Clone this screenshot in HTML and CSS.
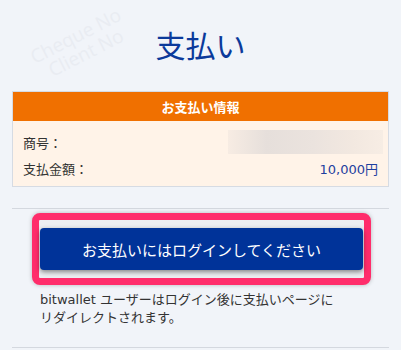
FILE: index.html
```html
<!DOCTYPE html>
<html lang="ja">
<head>
<meta charset="utf-8">
<link rel="stylesheet" href="styles.css">
</head>
<body>
<div class="watermark">
  <span class="wm wm1">Cheque No</span>
  <span class="wm wm2">Client No</span>
</div>
<div class="page">
  <h1 class="title">支払い</h1>
  <div class="card">
    <div class="card-head">お支払い情報</div>
    <div class="card-body">
      <div class="row">
        <span class="label">商号：</span>
        <span class="blur"></span>
      </div>
      <div class="row">
        <span class="label">支払金額：</span>
        <span class="value">10,000円</span>
      </div>
    </div>
  </div>
  <hr class="divider">
  <div class="highlight">
    <button class="login-btn">お支払いにはログインしてください</button>
  </div>
  <p class="note">bitwallet ユーザーはログイン後に支払いページに<br>リダイレクトされます。</p>
  <hr class="divider bottom">
</div>
</body>
</html>
```

FILE: styles.css
```css
html, body {
  margin: 0;
  padding: 0;
}
body {
  background: #f1f4f9;
  font-family: "DejaVu Sans", "Noto Sans CJK JP", sans-serif;
  color: #333;
  overflow: hidden;
  position: relative;
  height: 350px;
}
.watermark {
  position: absolute;
  inset: 0;
  pointer-events: none;
}
.wm {
  position: absolute;
  color: #e9ecf2;
  font-family: "Open Sans", sans-serif;
  font-size: 19px;
  line-height: 20px;
  white-space: nowrap;
  transform: rotate(-27deg);
  transform-origin: left bottom;
}
.wm1 { left: 36px; top: 47px; }
.wm2 { left: 54px; top: 60px; }
.page {
  position: relative;
  padding: 0 12px;
}
.title {
  margin: 0 0 29px;
  padding-top: 26px;
  font-family: "Noto Sans CJK JP", sans-serif;
  font-size: 30px;
  line-height: 36px;
  font-weight: 400;
  text-align: center;
  color: #0b3a9b;
}
.card {
  border: 1px solid #d6dbe3;
  background: #fff3e8;
}
.card-head {
  background: #f07000;
  color: #fff;
  text-align: center;
  font-family: "Noto Sans CJK JP", sans-serif;
  font-size: 13px;
  font-weight: 700;
  line-height: 29px;
  height: 29px;
}
.card-body {
  padding: 9px 10px 6px;
  display: flex;
  flex-direction: column;
  gap: 2px;
}
.row {
  display: flex;
  justify-content: space-between;
  align-items: center;
  height: 24px;
  font-size: 13px;
}
.label {
  color: #333;
}
.blur {
  width: 155px;
  height: 24px;
  margin-right: -5px;
  background: linear-gradient(90deg, #f7ece3 0%, #e6dfdb 25%, #ebe3de 55%, #f2e8e0 80%, #f7ede4 100%);
}
.value {
  color: #1e409f;
  font-size: 13px;
}
.divider {
  border: 0;
  border-top: 1px solid #d4d8df;
  margin: 21px 0 0;
}
.highlight {
  margin: 4px 18px 0 20px;
  border: 7px solid #ff2d6b;
  border-radius: 8px;
  padding: 8px 1px;
  background: #eceef2;
  box-shadow: 0 0 4px rgba(0, 0, 0, 0.25);
}
.login-btn {
  display: block;
  width: 100%;
  height: 42px;
  border: 0;
  border-radius: 4px;
  background: #003399;
  color: #fff;
  font-family: "Noto Sans CJK JP", sans-serif;
  font-size: 15px;
  box-shadow: 0 2px 5px rgba(0, 0, 0, 0.45);
  padding: 0;
}
.note {
  margin: 6px 0 0;
  padding-left: 28px;
  font-size: 13px;
  line-height: 18px;
  color: #333;
}
.divider.bottom {
  margin-top: 20px;
}
```
